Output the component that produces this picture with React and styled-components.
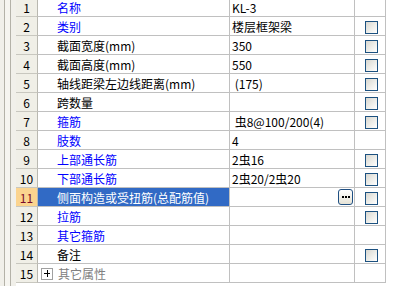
import styled, { createGlobalStyle } from 'styled-components';

const GlobalStyle = createGlobalStyle`
  html, body {
    margin: 0;
    padding: 0;
    background: #ffffff;
    overflow: hidden;
  }
  body {
    font-family: "Noto Sans CJK SC", "Liberation Sans", sans-serif;
    font-size: 12px;
  }
`;

const Page = styled.div`
  display: flex;
  width: 401px;
  height: 286px;
  overflow: hidden;
  background: #ffffff;
`;

const LeftStrip = styled.div`
  width: 16px;
  flex-shrink: 0;
  background: linear-gradient(
    to right,
    #f1f0ea 0 4px,
    #b4b2a8 4px 5px,
    #f6f5f0 5px 10px,
    #b4b2a8 10px 11px,
    #f1f0ea 11px
  );
`;

const Grid = styled.div`
  display: grid;
  grid-template-columns: 22px 192px 125px 31px;
  grid-auto-rows: 19px;
  margin-top: -2px;
  align-self: flex-start;
`;

const Cell = styled.div`
  box-sizing: border-box;
  border-right: 1px solid #c0c0c0;
  border-bottom: 1px solid #c0c0c0;
  display: flex;
  align-items: center;
  white-space: nowrap;
  overflow: hidden;
  line-height: 16px;
  padding-top: 2px;
`;

const RowHead = styled(Cell)`
  justify-content: center;
  background: ${({ $active }) => ($active ? '#fbd48f' : '#f0efe7')};
  color: ${({ $active }) => ($active ? '#7a0a2a' : '#000000')};
  border-right-color: #b9b8b0;
  border-bottom-color: #c8c7bf;
`;

const NameCell = styled(Cell)`
  padding-left: ${({ $indent }) => ($indent ? '3px' : '19px')};
  gap: 5px;
  background: ${({ $active }) => ($active ? '#316ac5' : '#ffffff')};
  color: ${({ $tone }) =>
    ({ blue: '#0000ff', black: '#000000', white: '#ffffff', gray: '#808080' })[$tone]};
`;

const ValueCell = styled(Cell)`
  padding-left: 2px;
  padding-right: 1px;
  color: #000000;
  justify-content: space-between;
`;

const CheckCell = styled(Cell)`
  justify-content: center;
  padding-left: 2px;
`;

const CheckBox = styled.span`
  box-sizing: border-box;
  width: 13px;
  height: 13px;
  margin-top: 1px;
  border: 1px solid #1c5180;
  background: linear-gradient(135deg, #d8d7d0 0%, #f0f0ec 60%, #ffffff 100%);
`;

const DotsButton = styled.span`
  box-sizing: border-box;
  width: 15px;
  height: 16px;
  margin-top: -2px;
  border: 1px solid #1f4f82;
  border-radius: 3px;
  background: linear-gradient(to bottom, #ffffff, #e6e3d6);
  display: flex;
  align-items: center;
  justify-content: center;
  gap: 1px;
`;

const Dot = styled.span`
  width: 2px;
  height: 2px;
  background: #000000;
`;

const Expander = styled.span`
  box-sizing: border-box;
  position: relative;
  width: 12px;
  height: 12px;
  border: 1px solid #a0a0a0;
  background: #ffffff;
  flex-shrink: 0;
  &::before,
  &::after {
    content: '';
    position: absolute;
    background: #000000;
  }
  &::before {
    left: 2px;
    top: 4px;
    width: 6px;
    height: 1px;
  }
  &::after {
    left: 5px;
    top: 1px;
    width: 1px;
    height: 7px;
  }
`;

const rows = [
  { name: '名称', tone: 'blue', value: 'KL-3', check: false },
  { name: '类别', tone: 'blue', value: '楼层框架梁', check: true },
  { name: '截面宽度(mm)', tone: 'black', value: '350', check: true },
  { name: '截面高度(mm)', tone: 'black', value: '550', check: true },
  { name: '轴线距梁左边线距离(mm)', tone: 'black', value: '\u00a0(175)', check: true },
  { name: '跨数量', tone: 'black', value: '', check: true },
  { name: '箍筋', tone: 'blue', value: '\u00a0虫8@100/200(4)', check: true },
  { name: '肢数', tone: 'blue', value: '4', check: false },
  { name: '上部通长筋', tone: 'blue', value: '2虫16', check: true },
  { name: '下部通长筋', tone: 'blue', value: '2虫20/2虫20', check: true },
  { name: '侧面构造或受扭筋(总配筋值)', tone: 'white', value: '', check: true, active: true },
  { name: '拉筋', tone: 'blue', value: '', check: true },
  { name: '其它箍筋', tone: 'blue', value: '', check: false },
  { name: '备注', tone: 'black', value: '', check: true },
  { name: '其它属性', tone: 'gray', value: '', check: false, group: true },
];

export default function App() {
  return (
    <Page>
      <GlobalStyle />
      <LeftStrip />
      <Grid>
        {rows.map((row, i) => (
          <Row key={i} index={i + 1} {...row} />
        ))}
      </Grid>
    </Page>
  );
}

function Row({ index, name, tone, value, check, active, group }) {
  return (
    <>
      <RowHead $active={active}>{index}</RowHead>
      <NameCell $tone={tone} $active={active} $indent={group}>
        {group && <Expander />}
        {name}
      </NameCell>
      <ValueCell>
        <span>{value}</span>
        {active && (
          <DotsButton>
            <Dot />
            <Dot />
            <Dot />
          </DotsButton>
        )}
      </ValueCell>
      <CheckCell>{check && <CheckBox />}</CheckCell>
    </>
  );
}
